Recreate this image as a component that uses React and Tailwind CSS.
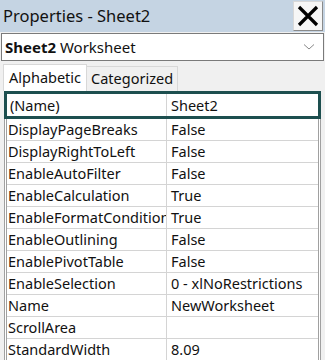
export default function App() {
  const rows = [
    ["DisplayPageBreaks", "False"],
    ["DisplayRightToLeft", "False"],
    ["EnableAutoFilter", "False"],
    ["EnableCalculation", "True"],
    ["EnableFormatConditionsCalculation", "True"],
    ["EnableOutlining", "False"],
    ["EnablePivotTable", "False"],
    ["EnableSelection", "0 - xlNoRestrictions"],
    ["Name", "NewWorksheet"],
    ["ScrollArea", ""],
    ["StandardWidth", "8.09"],
  ];
  const font = { fontFamily: '"Noto Sans", "Open Sans", sans-serif' };
  return (
    <div className="w-[325px] h-[360px] overflow-hidden bg-[#f0f0f0] flex flex-col" style={font}>
      <div className="h-[32px] bg-[#c5d4e3] flex items-center justify-between pl-[3px] pr-[2px] shrink-0">
        <span className="text-[16.5px] leading-none text-[#111]">Properties - Sheet2</span>
        <div className="w-[30px] h-[30px] bg-[#f6f6f6] border border-[#d8d8d8] border-r-[#8a8a8a] border-b-[#8a8a8a] flex items-center justify-center">
          <svg width="22" height="22" viewBox="0 0 22 22">
            <path d="M2 2 L20 20 M20 2 L2 20" stroke="#000" strokeWidth="3.2" />
          </svg>
        </div>
      </div>
      <div className="mt-[1px] mx-[1px] h-[28px] bg-white border border-[#7a7a7a] flex items-center justify-between pl-[3px] pr-[8px] shrink-0">
        <span className="text-[15px] leading-none text-[#111]">
          <b>Sheet2</b> Worksheet
        </span>
        <svg width="12" height="8" viewBox="0 0 12 8">
          <path d="M1 1.5 L6 6 L11 1.5" stroke="#888" strokeWidth="1" fill="none" />
        </svg>
      </div>
      <div className="flex items-end h-[30px] pl-[3px] shrink-0">
        <div className="h-[27px] px-[5px] bg-white border border-[#d8d8d8] border-b-0 flex items-center text-[14.5px] text-[#111]">Alphabetic</div>
        <div className="h-[25px] px-[4px] bg-[#f0f0f0] border border-[#d8d8d8] border-b-0 border-l-0 flex items-center text-[14.5px] text-[#111]">Categorized</div>
      </div>
      <div className="relative flex-1 mx-[4px] border-l-[3px] border-double border-[#a0a0a0] border-r-[3px] bg-white">
        <div className="absolute -left-[3px] -right-[3px] top-0 h-[28px] border-[3px] border-[#1d4f4f] z-10" />
        <div className="h-[28px] flex border-b border-[#d4d4d4] text-[14.5px] text-[#111] pt-[3px]">
          <div className="w-[160px] pl-[3px] border-r border-[#d4d4d4] overflow-hidden whitespace-nowrap leading-[22px]">(Name)</div>
          <div className="flex-1 pl-[4px] leading-[22px]">Sheet2</div>
        </div>
        {rows.map(([k, v]) => (
          <div key={k} className="h-[22px] flex border-b border-[#d4d4d4] text-[14.5px] text-[#111]">
            <div className="w-[160px] pl-[1px] border-r border-[#d4d4d4] overflow-hidden whitespace-nowrap leading-[21px]">{k}</div>
            <div className="flex-1 pl-[4px] leading-[21px] whitespace-nowrap">{v}</div>
          </div>
        ))}
      </div>
    </div>
  );
}
